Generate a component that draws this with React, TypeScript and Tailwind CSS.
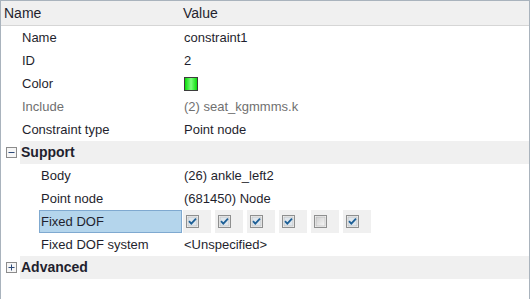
import React from 'react';

type Row = { label: string; value?: React.ReactNode; muted?: boolean };

const topRows: Row[] = [
  { label: 'Name', value: 'constraint1' },
  { label: 'ID', value: '2' },
  { label: 'Color', value: <ColorSwatch /> },
  { label: 'Include', value: '(2) seat_kgmmms.k', muted: true },
  { label: 'Constraint type', value: 'Point node' },
];

const dofs = [true, true, true, true, false, true];

function ColorSwatch() {
  return (
    <svg width="14" height="14" viewBox="0 0 14 14" className="block">
      <defs>
        <linearGradient id="sw" x1="0" x2="1" y1="0" y2="0">
          <stop offset="0" stopColor="#00d800" />
          <stop offset="0.5" stopColor="#7dff7d" />
          <stop offset="1" stopColor="#00d800" />
        </linearGradient>
      </defs>
      <rect x="0.5" y="0.5" width="13" height="13" fill="url(#sw)" stroke="#3c3c3c" />
    </svg>
  );
}

function Checkbox({ checked }: { checked: boolean }) {
  return (
    <svg width="13" height="13" viewBox="0 0 13 13" className="block">
      <defs>
        <linearGradient id="cbIn" x1="0" x2="1" y1="0" y2="1">
          <stop offset="0" stopColor="#cfcfcf" />
          <stop offset="1" stopColor="#f7f7f7" />
        </linearGradient>
      </defs>
      <rect x="0.5" y="0.5" width="12" height="12" fill="#f4f4f4" stroke="#8e8f8f" />
      <rect x="2" y="2" width="9" height="9" fill={checked ? '#dfe6ec' : 'url(#cbIn)'} stroke="#b6b6b6" strokeWidth="0.6" />
      {checked && (
        <path d="M3 6.2 L5.3 8.6 L10 3.6" fill="none" stroke="#1d5f96" strokeWidth="1.8" />
      )}
    </svg>
  );
}

function ToggleBox({ open }: { open: boolean }) {
  return (
    <svg width="11" height="11" viewBox="0 0 11 11" className="block">
      <rect x="0.5" y="0.5" width="10" height="10" fill="#f6f6f6" stroke="#8c8c8c" />
      <path d="M2.5 5.5 H8.5" stroke="#2d4a78" strokeWidth="1" />
      {!open && <path d="M5.5 2.5 V8.5" stroke="#2d4a78" strokeWidth="1" />}
    </svg>
  );
}

function GroupRow({ title, open }: { title: string; open: boolean }) {
  return (
    <div className="flex h-[23px] items-center">
      <div className="flex w-[19px] justify-end pr-[3px]">
        <ToggleBox open={open} />
      </div>
      <div className="flex h-full flex-1 items-center bg-[#f0f0f0] pl-[1px] text-[14px] font-bold text-[#1f1f2e]">
        {title}
      </div>
    </div>
  );
}

export default function App() {
  return (
    <div
      className="flex h-[299px] w-[530px] flex-col border-l border-r border-t border-[#a9b3bd] bg-white text-[13px] text-[#1f1f2e]"
      style={{ fontFamily: '"Liberation Sans", Arial, sans-serif' }}
    >
      <div className="flex h-[25px] items-center border-b border-[#d6d6d6] bg-[#f0f0f0] text-[14px]">
        <div className="w-[181px] pl-[3px]">Name</div>
        <div className="pl-[1px]">Value</div>
      </div>

      {topRows.map((r) => (
        <div key={r.label} className={`flex h-[23px] items-center ${r.muted ? 'text-[#707070]' : ''}`}>
          <div className="w-[183px] pl-[21px]">{r.label}</div>
          <div>{r.value}</div>
        </div>
      ))}

      <GroupRow title="Support" open />

      <div className="flex h-[23px] items-center">
        <div className="w-[183px] pl-[40px]">Body</div>
        <div>(26) ankle_left2</div>
      </div>
      <div className="flex h-[23px] items-center">
        <div className="w-[183px] pl-[40px]">Point node</div>
        <div>(681450) Node</div>
      </div>
      <div className="flex h-[23px] items-stretch">
        <div className="w-[38px]" />
        <div className="flex w-[143px] items-center border border-[#7fa9d0] bg-[#b4d5ec] pl-[1px]">Fixed DOF</div>
        <div className="ml-[1px] flex gap-[4px]">
          {dofs.map((c, i) => (
            <div key={i} className="flex w-[28px] items-center bg-[#f0f0f0] pl-[3px]">
              <Checkbox checked={c} />
            </div>
          ))}
        </div>
      </div>
      <div className="flex h-[23px] items-center">
        <div className="w-[183px] pl-[40px]">Fixed DOF system</div>
        <div>&lt;Unspecified&gt;</div>
      </div>

      <GroupRow title="Advanced" open={false} />
    </div>
  );
}
